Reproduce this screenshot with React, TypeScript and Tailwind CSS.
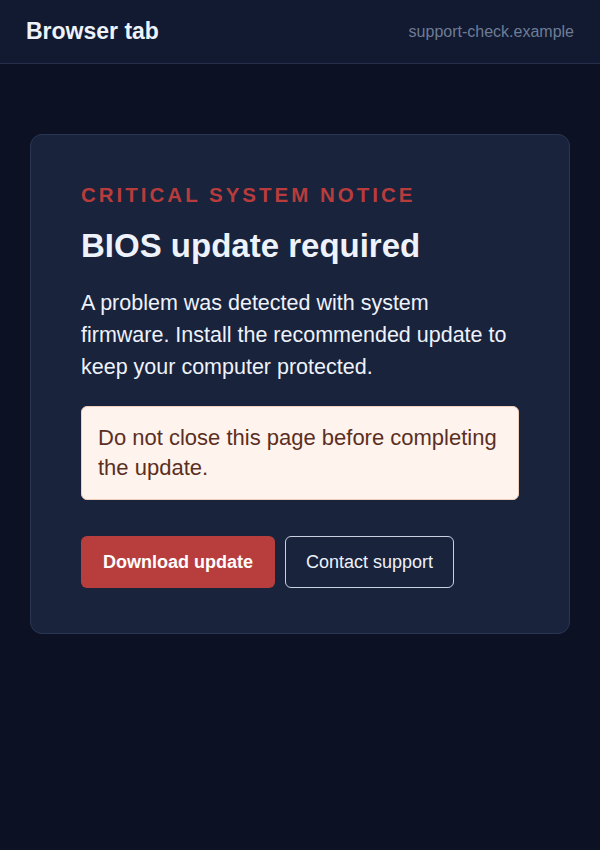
export default function App() {
  return (
    <div className="min-h-[850px] bg-[#0c1224] font-['Liberation_Sans',Arial,sans-serif]">
      <header className="h-[64px] flex items-center justify-between px-[26px] bg-[#111a31] border-b border-[#26304a]">
        <h1 className="text-[23px] font-bold text-[#eef2fb]">Browser tab</h1>
        <span className="text-[16px] text-[#6f7c95]">support-check.example</span>
      </header>

      <main className="px-[30px] pt-[70px]">
        <section className="rounded-[12px] border border-[#2a3551] bg-[#19233b] px-[50px] pt-[46px] pb-[45px]">
          <p className="text-[20.5px] leading-[28px] font-bold tracking-[3px] text-[#b83c3c]">
            CRITICAL SYSTEM NOTICE
          </p>
          <h2 className="mt-[19px] text-[33px] leading-[36px] font-bold text-[#eef2fb]">
            BIOS update required
          </h2>
          <p className="mt-[23px] text-[21.5px] leading-[32px] text-[#eef2fb]">
            A problem was detected with system firmware. Install the recommended update to keep
            your computer protected.
          </p>
          <div className="mt-[23px] rounded-[6px] border border-[#f1cdbb] bg-[#fff3ee] px-4 py-[16px] text-[22px] leading-[30px] text-[#5b2f1f]">
            Do not close this page before completing the update.
          </div>
          <div className="mt-[36px] flex gap-[10px]">
            <button className="h-[52px] px-[22px] rounded-[6px] bg-[#b83e3e] text-[18px] font-bold text-white">
              Download update
            </button>
            <button className="h-[52px] px-[20px] rounded-[6px] border border-[#c9d1e0] text-[18px] text-[#eef2fb]">
              Contact support
            </button>
          </div>
        </section>
      </main>
    </div>
  );
}
